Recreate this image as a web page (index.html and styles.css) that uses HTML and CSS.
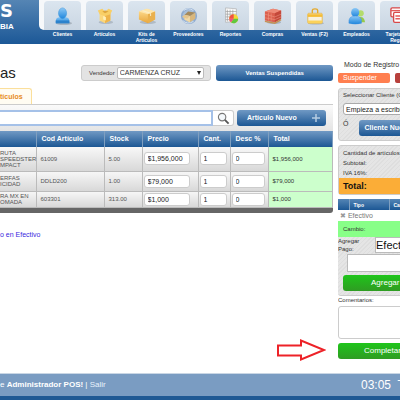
FILE: index.html
```html
<!DOCTYPE html>
<html lang="es">

<head>
    <meta charset="UTF-8">
    <meta name="viewport" content="width=device-width, initial-scale=1.0">
    <title>Ventas - POS</title>
    <link rel="stylesheet" href="styles.css">
</head>

<body>
    <header class="header">
        <div class="brand">
            <div class="brand-name">S</div>
            <div class="brand-sub">BIA</div>
        </div>
        <nav class="menu">
            <a class="menu-item" href="#">
                <span class="tile"><svg viewBox="0 0 20 20"><defs><linearGradient id="blue" x2="0" y2="1"><stop stop-color="#8cc8f6"/><stop offset="1" stop-color="#1f86dc"/></linearGradient><linearGradient id="gold" x2="0" y2="1"><stop stop-color="#ffe29a"/><stop offset="1" stop-color="#e9a63a"/></linearGradient></defs><ellipse cx="11" cy="18" rx="9" ry="2" fill="#8f9aa5" opacity=".6"/><path d="M2 18q-1-7 5-7h5q6 0 5 7z" fill="url(#blue)"/><path d="M2 15h15v3h-15z" fill="#2c82cc"/><ellipse cx="9.500" cy="7" rx="4.500" ry="6" fill="url(#blue)" stroke="#4298dc" stroke-width=".6"/></svg></span>
                <span>Clientes</span>
            </a>
            <a class="menu-item" href="#">
                <span class="tile"><svg viewBox="0 0 20 20"><ellipse cx="11" cy="17" rx="8" ry="2" fill="#8f9aa5" opacity=".5"/><path d="M4 7l6 2 6-2v8l-6 3-6-3z" fill="#fbd77c"/><path d="M10 9v9l6-3V7z" fill="#eeb44a"/><path d="M2 4l5-2 3 3 4-3 4 2-2 4-6 2-6-2z" fill="#f9cf66"/><path d="M7 5l3-1 4 1-4 2z" fill="#dda63e"/><path d="M8 10l3 1v4l-3-1z" fill="#fff0b8"/></svg></span>
                <span>Artículos</span>
            </a>
            <a class="menu-item" href="#">
                <span class="tile"><svg viewBox="0 0 20 20"><ellipse cx="11" cy="17" rx="9" ry="2" fill="#8f9aa5" opacity=".5"/><path d="M1 5l9-3 9 3v9l-8 4-10-4z" fill="url(#gold)"/><path d="M1 5l9-3 9 3-8 3z" fill="#ffe6ab"/><path d="M11 8l8-3v9l-8 4z" fill="#eab04c"/><path d="M5 4l9 3v3" stroke="#f9f0cf" fill="none"/></svg></span>
                <span>Kits de<br>Artículos</span>
            </a>
            <a class="menu-item" href="#">
                <span class="tile"><svg viewBox="0 0 20 20"><circle cx="10" cy="10" r="8" fill="#a9bfd8" stroke="#8eabd0" stroke-width="2"/><path d="M4 4q5-4 11 0M3 15q5 5 12 1" stroke="#e0eaf4" fill="none"/><path d="M5 9l6 1 6-4v7l-6 4-6-3z" fill="#d9b77c"/><path d="M5 9l4-4 8 1-6 4z" fill="#a58a5c"/><path d="M5 9l6 1v7l-6-3z" fill="#f0d9a8"/><path d="M5 9l-3 2 6 2 3-3z" fill="#e5c58c"/></svg></span>
                <span>Proveedores</span>
            </a>
            <a class="menu-item" href="#">
                <span class="tile"><svg viewBox="0 0 20 20"><path d="M4 1l12 1v14l-12 1z" fill="#fafafa" stroke="#aaa" stroke-width=".7"/><path d="M6 3v13M9 3v13M12 3v13M4 5h12M4 8h12M4 11h12M4 14h12" stroke="#999" stroke-width=".7"/><circle cx="13" cy="13" r="5" fill="#f5d533"/><path d="M13 13V8a5 5 0 0 0-5 5z" fill="#ef5046"/><path d="M13 13h5a5 5 0 0 1-8 4z" fill="#5fc83f"/><path d="M13 13l-3 4a5 5 0 0 1-2-4z" fill="#ee4e8a"/></svg></span>
                <span>Reportes</span>
            </a>
            <a class="menu-item" href="#">
                <span class="tile"><svg viewBox="0 0 20 20"><ellipse cx="11" cy="17" rx="8" ry="2" fill="#8f9aa5" opacity=".6"/><path d="M1 5l9-3 9 2v9l-7 4-11-2z" fill="#dc604e"/><path d="M1 5l9-3 9 2-7 3z" fill="#ee8a77"/><path d="M12 7l7-3v9l-7 4z" fill="#c4483a"/><path d="M1 8l11 3 7-3M1 12l11 2 7-3M5 6v9M8 7v8" stroke="#f09a85" stroke-width=".6" fill="none"/><path d="M1 16l11 2 7-4" stroke="#c69152" stroke-width="1.500" fill="none"/></svg></span>
                <span>Compras</span>
            </a>
            <a class="menu-item" href="#">
                <span class="tile"><svg viewBox="0 0 20 20"><ellipse cx="11" cy="18" rx="9" ry="1.500" fill="#8f9aa5" opacity=".6"/><path d="M7 8V4q0-2 3-2t3 2v4" stroke="#e6a929" stroke-width="1.500" fill="none"/><rect x="2" y="7" width="16" height="11" rx="1" fill="#f8f1df" stroke="#e8ac26" stroke-width=".8"/><path d="M2 8h16v3h-16z" fill="#f5bd35"/><path d="M2 15h16v3h-16z" fill="#fbd25a"/></svg></span>
                <span>Ventas (F2)</span>
            </a>
            <a class="menu-item" href="#">
                <span class="tile"><svg viewBox="0 0 20 20"><circle cx="14" cy="7" r="3.500" fill="#b4dc6c"/><path d="M10 17q0-6 4-6t5 6z" fill="#96ca4c"/><ellipse cx="8" cy="6" rx="4.500" ry="5" fill="url(#blue)"/><path d="M1 18q-1-8 7-8t7 8q-7 2-14 0z" fill="url(#blue)" stroke="#3f8fe0" stroke-width=".5"/></svg></span>
                <span>Empleados</span>
            </a>
            <a class="menu-item" href="#">
                <span class="tile"><svg viewBox="0 0 20 20"><rect x="1" y="1" width="15" height="10" rx="1.500" fill="#fff" stroke="#d84848" stroke-width="1.500"/><path d="M1 4h15" stroke="#e35a5a" stroke-width="1.500"/><rect x="4" y="6" width="15" height="11" rx="1.500" fill="#fff" stroke="#d84848" stroke-width="1.500"/><path d="M6 10h8M6 13h5" stroke="#e35a5a" stroke-width="1.500"/></svg></span>
                <span>Tarjetas de<br>Regalo</span>
            </a>
        </nav>
    </header>

    <main class="main">
        <section class="sale">
            <div class="title-row">
                <h1>as</h1>
                <div class="seller">
                    <label for="seller">Vendedor</label>
                    <select id="seller">
                        <option>CARMENZA CRUZ</option>
                    </select>
                </div>
                <button class="btn btn-suspended" type="button">Ventas Suspendidas</button>
            </div>

            <div class="tabs">
                <a class="tab" href="#">tículos</a>
            </div>

            <div class="toolbar">
                <input class="search" type="text" aria-label="Buscar artículo">
                <button class="search-btn" type="button" aria-label="Buscar">
                    <svg viewBox="0 0 14 14"><circle cx="5.500" cy="5.500" r="4" fill="#f4f8fb" stroke="#777" stroke-width="1.200"/><path d="M8.500 8.500l4 4" stroke="#555" stroke-width="2"/></svg>
                </button>
                <button class="btn btn-new" type="button">
                    Artículo Nuevo
                    <svg viewBox="0 0 10 10"><path d="M5 1v8M1 5h8" stroke="#b5cce2" stroke-width="1.500"/></svg>
                </button>
            </div>

            <table class="items">
                <colgroup>
                    <col class="col-name">
                    <col class="col-code">
                    <col class="col-stock">
                    <col class="col-price">
                    <col class="col-qty">
                    <col class="col-disc">
                    <col>
                </colgroup>
                <thead>
                    <tr>
                        <th></th>
                        <th>Cod Artículo</th>
                        <th>Stock</th>
                        <th>Precio</th>
                        <th>Cant.</th>
                        <th>Desc %</th>
                        <th>Total</th>
                    </tr>
                </thead>
                <tbody>
                    <tr class="tall">
                        <td class="name">RUTA<br>SPEEDSTER<br>MPACT</td>
                        <td>61009</td>
                        <td>5.00</td>
                        <td class="field"><input type="text" value="$1,956,000" aria-label="Precio"></td>
                        <td class="field"><input type="text" value="1" aria-label="Cantidad"></td>
                        <td class="field"><input type="text" value="0" aria-label="Descuento"></td>
                        <td class="total">$1,956,000</td>
                    </tr>
                    <tr class="medium">
                        <td class="name">ERFAS<br>ICIDAD</td>
                        <td>DDLD200</td>
                        <td>1.00</td>
                        <td class="field"><input type="text" value="$79,000" aria-label="Precio"></td>
                        <td class="field"><input type="text" value="1" aria-label="Cantidad"></td>
                        <td class="field"><input type="text" value="0" aria-label="Descuento"></td>
                        <td class="total">$79,000</td>
                    </tr>
                    <tr>
                        <td class="name">RA MX EN<br>OMADA</td>
                        <td>603301</td>
                        <td>313.00</td>
                        <td class="field"><input type="text" value="$1,000" aria-label="Precio"></td>
                        <td class="field"><input type="text" value="1" aria-label="Cantidad"></td>
                        <td class="field"><input type="text" value="0" aria-label="Descuento"></td>
                        <td class="total">$1,000</td>
                    </tr>
                </tbody>
            </table>
            <div class="items-end"></div>

            <a class="cash-link" href="#">o en Efectivo</a>
        </section>

        <aside class="side">
            <div class="mode">Modo de Registro</div>
            <div class="actions">
                <button class="btn-hold" type="button">Suspender</button>
                <button class="btn-cancel" type="button" aria-label="Cancelar"></button>
            </div>

            <div class="panel client">
                <label for="client">Seleccionar Cliente (Opcional)</label>
                <input id="client" type="text" value="Empieza a escribir">
                <div class="client-new">
                    <span>Ó</span>
                    <button class="btn" type="button">Cliente Nuevo</button>
                </div>
            </div>

            <div class="panel totals">
                <div class="line">Cantidad de artículos:</div>
                <div class="line">Subtotal:</div>
                <div class="line">IVA 16%:</div>
                <div class="grand">Total:</div>
            </div>

            <div class="panel payment">
                <table class="pays">
                    <thead>
                        <tr>
                            <th class="del"></th>
                            <th class="type">Tipo</th>
                            <th>Cantidad</th>
                        </tr>
                    </thead>
                    <tbody>
                        <tr>
                            <td colspan="3"><span class="remove">✖</span> Efectivo</td>
                        </tr>
                    </tbody>
                </table>
                <div class="change">Cambio:</div>
                <div class="add-pay">
                    <label for="pay-type">Agregar Pago:</label>
                    <select id="pay-type">
                        <option>Efectivo</option>
                    </select>
                </div>
                <input class="pay-amount" type="text" aria-label="Monto">
                <button class="btn-green btn-add" type="button">Agregar Pago</button>
            </div>

            <label class="comments-label" for="comments">Comentarios:</label>
            <textarea id="comments"></textarea>
            <button class="btn-green" type="button">Completar Venta</button>
        </aside>

        <svg class="arrow" viewBox="0 0 50 22"><path d="M2 6.500h23V1.500L48 11 25 20.500v-4H2z" fill="#fff" stroke="#ed2228" stroke-width="2"/></svg>
    </main>

    <footer class="footer">
        <div>e <b>Administrador POS!</b> | <a href="#">Salir</a></div>
        <div class="clock">03:05&nbsp; T</div>
    </footer>
</body>

</html>
```

FILE: styles.css
```css
* {
    box-sizing: border-box;
}

body {
    display: flex;
    flex-direction: column;
    margin: 0;
    min-height: 100vh;
    overflow: hidden;
    background: #fff;
    color: #333;
    font-family: "Liberation Sans", Arial, sans-serif;
    font-size: 6px;
    line-height: 8px;
}

button,
input,
select,
textarea {
    margin: 0;
    font-family: inherit;
    line-height: 8px;
}

a {
    text-decoration: none;
}

/* Header */
.header {
    display: flex;
    height: 44px;
    overflow: hidden;
    background: linear-gradient(#5585b4, #1c5897);
}

.brand {
    flex: 0 0 39px;
    color: #fff;
    font-weight: bold;
}

.brand-name {
    font-family: "DejaVu Sans", sans-serif;
    font-size: 18px;
    line-height: 22px;
}

.brand-sub {
    font-size: 8px;
    line-height: 10px;
}

.menu {
    position: relative;
    display: flex;
    flex: 1;
    gap: 5px;
    padding: 1px 0 0 5px;
    min-width: 0;
}

.menu::before {
    content: "";
    position: absolute;
    top: 0;
    left: 0;
    width: 100%;
    height: 30px;
    background: #f6f8fa;
    border-bottom-left-radius: 5px;
}

.menu-item {
    position: relative;
    flex: 0 0 37px;
    color: #fff;
    font-size: 5px;
    font-weight: bold;
    line-height: 6px;
    text-align: center;
    white-space: nowrap;
}

.tile {
    display: flex;
    align-items: center;
    justify-content: center;
    height: 29px;
    margin-bottom: 1px;
    background: linear-gradient(#dbe5ef, #cad6e2);
    border-radius: 4px 4px 0 0;
}

.tile svg {
    width: 18px;
    height: 18px;
}

/* Main */
.main {
    position: relative;
    display: flex;
    flex: 1;
    gap: 5px;
}

.sale {
    flex: 1;
    min-width: 0;
    padding-top: 21px;
}

.title-row {
    display: flex;
    align-items: center;
    height: 16px;
}

h1 {
    flex: 0 0 81px;
    margin: 0;
    font-size: 15px;
    font-weight: normal;
    line-height: 16px;
    color: #222;
}

.seller {
    display: flex;
    flex: 1;
    align-items: center;
    gap: 2px;
    height: 16px;
    margin-right: 5px;
    padding: 0 6px 0 7px;
    border: 1px solid #ccc;
    border-radius: 3px;
    background: #e3e3e3;
}

.seller select {
    flex: 1;
    min-width: 0;
    height: 12px;
    padding: 0 2px;
    border: 1px solid #bbb;
    border-radius: 2px;
    background: #fff url("data:image/svg+xml,%3Csvg xmlns='http://www.w3.org/2000/svg' viewBox='0 0 4 4'%3E%3Cpath d='M0 0h4L2 4z' fill='%23222'/%3E%3C/svg%3E") no-repeat right 2px center / 4px 4px;
    color: #333;
    font-size: 7px;
    appearance: none;
}

.btn {
    height: 16px;
    padding: 0;
    border: 0;
    border-radius: 3px;
    background: linear-gradient(#7099c4, #1c5794);
    color: #fff;
    font-size: 7px;
    font-weight: bold;
}

.btn-suspended {
    flex: 0 0 35%;
    font-size: 6px;
}

.tabs {
    display: flex;
    padding-top: 7px;
}

.tab {
    padding: 4px 8px 3px 0;
    border: 1px solid #fbdf9b;
    border-width: 1px 1px 0 0;
    border-radius: 0 3px 0 0;
    background: #fffcf2;
    color: #e78b1c;
    font-size: 7px;
    font-weight: bold;
}

.toolbar {
    display: flex;
    align-items: center;
    padding: 5px 7px 5px 0;
    border-top: 1px solid #ccc;
    background: linear-gradient(#fafafa, #e4e4e4);
}

.search {
    flex: 1;
    min-width: 0;
    height: 16px;
    border: 2px solid #a5c1e8;
    border-left: 0;
    background: #fff;
}

.search-btn {
    display: flex;
    align-items: center;
    justify-content: center;
    width: 21px;
    height: 16px;
    margin-right: 3px;
    padding: 0;
    border: 1px solid #ccc;
    border-left: 0;
    border-radius: 0 3px 3px 0;
    background: #fff;
}

.search-btn svg {
    width: 13px;
    height: 13px;
}

.btn-new {
    display: flex;
    flex: 0 0 89px;
    align-items: center;
    justify-content: space-between;
    padding: 0 5px 0 10px;
}

.btn-new svg {
    width: 10px;
    height: 10px;
}

/* Items table */
.items {
    width: 100%;
    border-collapse: collapse;
    table-layout: fixed;
}

.col-name {
    width: 36px;
}

.col-code {
    width: 68px;
}

.col-stock {
    width: 38px;
}

.col-price {
    width: 56px;
}

.col-qty {
    width: 32px;
}

.col-disc {
    width: 38px;
}

.items th {
    height: 16px;
    padding: 0 0 0 5px;
    border-right: 1px solid #7f9fc0;
    color: #fff;
    font-size: 7px;
    text-align: left;
    white-space: nowrap;
}

.items thead tr {
    background: linear-gradient(#7099c4, #1c5794);
}

.items tbody tr {
    height: 16px;
    background: linear-gradient(#f8f8f8, #d8d8d8);
}

.items tbody .medium {
    height: 20px;
}

.items tbody .tall {
    height: 24px;
}

.items td {
    padding: 0 0 0 4px;
    border-right: 1px solid #bbb;
    border-bottom: 1px solid #bbb;
    color: #555;
}

.items .name {
    padding: 0;
    line-height: 6px;
    white-space: nowrap;
}

.items .field {
    padding: 0 3px 0 1px;
}

.items .field:nth-child(4) {
    padding-right: 8px;
}

.items input {
    display: block;
    width: 100%;
    height: 13px;
    padding: 0 3px;
    border: 1px solid #ccc;
    border-radius: 3px;
    color: #222;
    font-size: 7px;
}

.items .total {
    background: #ccffcc;
    color: #333;
}

.items-end {
    height: 5px;
    background: #666;
    border-bottom-right-radius: 3px;
}

.cash-link {
    display: block;
    margin-top: 18px;
    color: #3a1fe0;
    font-size: 7px;
}

/* Side column */
.side {
    flex: 0 0 62px;
    min-width: 0;
    padding-top: 16px;
    overflow: hidden;
    white-space: nowrap;
}

.mode {
    padding: 1px 0 4px 6px;
    font-size: 7px;
}

.actions {
    display: flex;
    gap: 5px;
    margin-bottom: 5px;
}

.btn-hold,
.btn-cancel {
    flex: 0 0 52px;
    height: 10px;
    padding: 0 0 0 5px;
    border: 0;
    border-radius: 2px;
    background: #ff7f50;
    color: #fff;
    font-size: 7px;
    text-align: left;
}

.btn-cancel {
    background: #b8403c;
}

.panel {
    width: 130px;
    margin-bottom: 4px;
    border: 1px solid #ccc;
    border-radius: 3px;
    background: repeating-linear-gradient(135deg, #e5e5e5 0, #e5e5e5 2px, #dedede 2px, #dedede 3px);
}

.client {
    padding: 2px 4px;
}

.client label {
    display: block;
    margin-bottom: 4px;
}

.client input {
    display: block;
    width: 100%;
    height: 12px;
    padding: 0 2px;
    border: 1px solid #aaa;
    border-radius: 3px;
    color: #222;
    font-size: 7px;
}

.client-new {
    display: flex;
    gap: 11px;
    padding: 5px 0 2px;
    font-size: 7px;
}

.client-new .btn {
    padding: 0 5px;
}

.totals {
    padding-top: 2px;
}

.line {
    padding: 0 4px;
    line-height: 10px;
}

.grand {
    padding: 0 4px;
    background: #fbad37;
    color: #111;
    font-size: 9px;
    font-weight: bold;
    line-height: 16px;
}

.payment {
    padding-bottom: 4px;
    border-top: 0;
    border-left: 0;
}

.pays {
    width: 100%;
    border-collapse: collapse;
    table-layout: fixed;
}

.pays th {
    height: 11px;
    padding: 0 4px;
    border-right: 1px solid #7f9fc0;
    background: linear-gradient(#5485b5, #1c5794);
    color: #fff;
    font-size: 5px;
    text-align: left;
}

.pays .del {
    width: 11px;
}

.pays .type {
    width: 40px;
}

.pays td {
    height: 11px;
    padding: 0 2px;
    background: #fff;
    color: #777;
    font-size: 7px;
}

.remove {
    color: #999;
}

.change {
    padding: 0 5px;
    background: #88ff88;
    line-height: 16px;
}

.add-pay {
    display: flex;
    white-space: normal;
}

.add-pay label {
    flex: 0 0 37px;
    padding-right: 10px;
}

.add-pay select {
    width: 80px;
    height: 16px;
    padding: 0;
    border: 1px solid #bbb;
    background: #fff;
    color: #111;
    font-size: 11px;
    line-height: 14px;
    appearance: none;
}

.pay-amount {
    display: block;
    width: 108px;
    height: 18px;
    margin: 1px 0 3px 9px;
    border: 1px solid #bbb;
}

.btn-green {
    display: block;
    width: 130px;
    height: 16px;
    padding: 0 0 0 26px;
    border: 0;
    border-radius: 3px;
    background: linear-gradient(#1fc51b, #2f9c23);
    color: #fff;
    font-size: 8px;
    text-align: left;
}

.btn-add {
    width: 120px;
    margin-left: 5px;
    padding-left: 28px;
}

.comments-label {
    display: block;
    margin-top: -4px;
}

#comments {
    display: block;
    width: 130px;
    height: 33px;
    margin: 2px 0 4px;
    border: 1px solid #ccc;
    border-radius: 3px;
    resize: none;
}

.arrow {
    position: absolute;
    right: 74px;
    bottom: 12px;
    width: 50px;
    height: 22px;
}

/* Footer */
.footer {
    display: flex;
    align-items: center;
    justify-content: space-between;
    height: 27px;
    border-top: 1px solid #c9d6e4;
    border-bottom: 4px solid #1f5994;
    background: #7a9cc2;
    color: #fff;
    font-size: 8px;
    white-space: nowrap;
}

.footer a {
    color: #e8f2fc;
}

.clock {
    flex: 0 0 39px;
    overflow: hidden;
    font-size: 12px;
    line-height: 20px;
}
```
